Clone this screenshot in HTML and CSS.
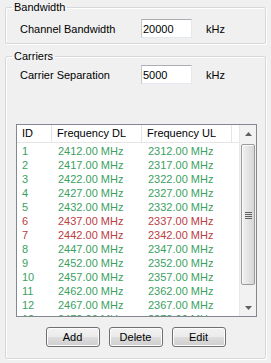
FILE: index.html
```html
<!DOCTYPE html>
<html lang="en">
<head>
    <meta charset="UTF-8">
    <title>Carrier Settings</title>
    <link rel="stylesheet" href="styles.css">
</head>
<body>
    <fieldset class="group group-bandwidth">
        <legend>Bandwidth</legend>
        <div class="field-row">
            <label class="field-label">Channel Bandwidth</label>
            <input class="field-input" type="text" value="20000">
            <span class="field-unit">kHz</span>
        </div>
    </fieldset>

    <fieldset class="group group-carriers">
        <legend>Carriers</legend>
        <div class="field-row">
            <label class="field-label">Carrier Separation</label>
            <input class="field-input" type="text" value="5000">
            <span class="field-unit">kHz</span>
        </div>

        <div class="list">
            <div class="list-main">
                <div class="list-header">
                    <div class="col">ID</div>
                    <div class="col">Frequency DL</div>
                    <div class="col">Frequency UL</div>
                    <div class="col col-rest"></div>
                </div>
                <div class="list-rows">
                    <div class="row ok"><span>1</span><span>2412.00 MHz</span><span>2312.00 MHz</span></div>
                    <div class="row ok"><span>2</span><span>2417.00 MHz</span><span>2317.00 MHz</span></div>
                    <div class="row ok"><span>3</span><span>2422.00 MHz</span><span>2322.00 MHz</span></div>
                    <div class="row ok"><span>4</span><span>2427.00 MHz</span><span>2327.00 MHz</span></div>
                    <div class="row ok"><span>5</span><span>2432.00 MHz</span><span>2332.00 MHz</span></div>
                    <div class="row bad"><span>6</span><span>2437.00 MHz</span><span>2337.00 MHz</span></div>
                    <div class="row bad"><span>7</span><span>2442.00 MHz</span><span>2342.00 MHz</span></div>
                    <div class="row ok"><span>8</span><span>2447.00 MHz</span><span>2347.00 MHz</span></div>
                    <div class="row ok"><span>9</span><span>2452.00 MHz</span><span>2352.00 MHz</span></div>
                    <div class="row ok"><span>10</span><span>2457.00 MHz</span><span>2357.00 MHz</span></div>
                    <div class="row ok"><span>11</span><span>2462.00 MHz</span><span>2362.00 MHz</span></div>
                    <div class="row ok"><span>12</span><span>2467.00 MHz</span><span>2367.00 MHz</span></div>
                    <div class="row ok"><span>13</span><span>2472.00 MHz</span><span>2372.00 MHz</span></div>
                </div>
            </div>
            <div class="scrollbar">
                <div class="scroll-btn">
                    <svg width="7" height="4" viewBox="0 0 7 4"><path d="M3.5 0 L7 4 L0 4 Z" fill="#606060"/></svg>
                </div>
                <div class="scroll-track">
                    <div class="scroll-thumb">
                        <span class="grip"></span>
                    </div>
                </div>
                <div class="scroll-btn">
                    <svg width="7" height="4" viewBox="0 0 7 4"><path d="M0 0 L7 0 L3.5 4 Z" fill="#606060"/></svg>
                </div>
            </div>
        </div>

        <div class="buttons">
            <button class="btn">Add</button>
            <button class="btn">Delete</button>
            <button class="btn">Edit</button>
        </div>
    </fieldset>
</body>
</html>
```

FILE: styles.css
```css
* {
    box-sizing: border-box;
}

body {
    margin: 0;
    padding: 0 5px;
    width: 271px;
    height: 363px;
    background-color: #f0f0f0;
    font-family: "Liberation Sans", Arial, sans-serif;
    font-size: 11px;
    color: #000;
    overflow: hidden;
}

.group {
    margin: 0;
    padding: 0 8px 0 10px;
    border: 1px solid #d5d9dc;
    border-radius: 2px;
    box-shadow: inset 1px 1px 0 #fff, 1px 1px 0 #fff;
    min-width: 0;
}

.group legend {
    margin-left: -4px;
    padding: 0 2px;
    height: 14px;
    line-height: 14px;
}

.group-bandwidth {
    height: 44px;
}

.group-carriers {
    margin-top: 5px;
    height: 310px;
}

.field-row {
    display: flex;
    align-items: center;
    padding-left: 4px;
    margin-top: 5px;
}

.group-carriers .field-row {
    margin-top: 2px;
}

.field-label {
    width: 121px;
}

.field-input {
    width: 51px;
    height: 19px;
    margin: 0;
    padding: 0 1px;
    border: 1px solid #e3e9ef;
    border-top-color: #abadb3;
    border-left-color: #c5c9cf;
    background: #fff;
    font-family: inherit;
    font-size: 11px;
    color: #000;
}

.field-unit {
    margin-left: 14px;
}

.list {
    display: flex;
    margin-top: 40px;
    height: 193px;
    border: 1px solid #828790;
    background: #fff;
}

.list-main {
    flex: 1;
    overflow: hidden;
}

.list-header,
.row {
    display: grid;
    grid-template-columns: 35px 90px 90px 1fr;
}

.list-header {
    height: 18px;
    border-bottom: 1px solid #e5e5e5;
}

.list-header .col {
    line-height: 17px;
    padding-left: 5px;
    border-right: 1px solid #e5e5e5;
}

.list-header .col-rest {
    border-right: none;
}

.list-rows {
    padding-top: 1px;
}

.row {
    height: 14px;
    line-height: 14px;
}

.row span {
    padding-left: 5px;
    white-space: nowrap;
}

.row span:nth-child(2),
.row span:nth-child(3) {
    padding-left: 6px;
}

.row.ok {
    color: #3c9f62;
}

.row.bad {
    color: #b8403f;
}

.scrollbar {
    width: 17px;
    display: flex;
    flex-direction: column;
    background: #f2f2f2;
    border-left: 1px solid #e8e8e8;
}

.scroll-btn {
    height: 17px;
    display: flex;
    align-items: center;
    justify-content: center;
}

.scroll-track {
    flex: 1;
    padding: 2px 1px 12px 1px;
}

.scroll-thumb {
    height: 141px;
    border: 1px solid #9b9b9b;
    border-radius: 2px;
    background: linear-gradient(to right, #f1f1f1, #e4e4e4 50%, #d6d6d6);
    box-shadow: inset 1px 1px 0 #fbfbfb;
    display: flex;
    align-items: center;
    justify-content: center;
}

.grip {
    width: 7px;
    height: 7px;
    background: repeating-linear-gradient(to bottom, #606060 0 1px, transparent 1px 2px);
    margin-top: 1px;
}

.buttons {
    display: flex;
    justify-content: center;
    gap: 9px;
    margin-top: 10px;
    padding-right: 2px;
}

.btn {
    width: 54px;
    height: 20px;
    margin: 0;
    padding: 0;
    border: 1px solid #707070;
    border-radius: 3px;
    background: linear-gradient(to bottom, #f2f2f2 0%, #ebebeb 50%, #dddddd 51%, #cfcfcf 100%);
    box-shadow: inset 0 0 0 1px #fcfcfc;
    font-family: inherit;
    font-size: 11px;
    color: #000;
}
```
